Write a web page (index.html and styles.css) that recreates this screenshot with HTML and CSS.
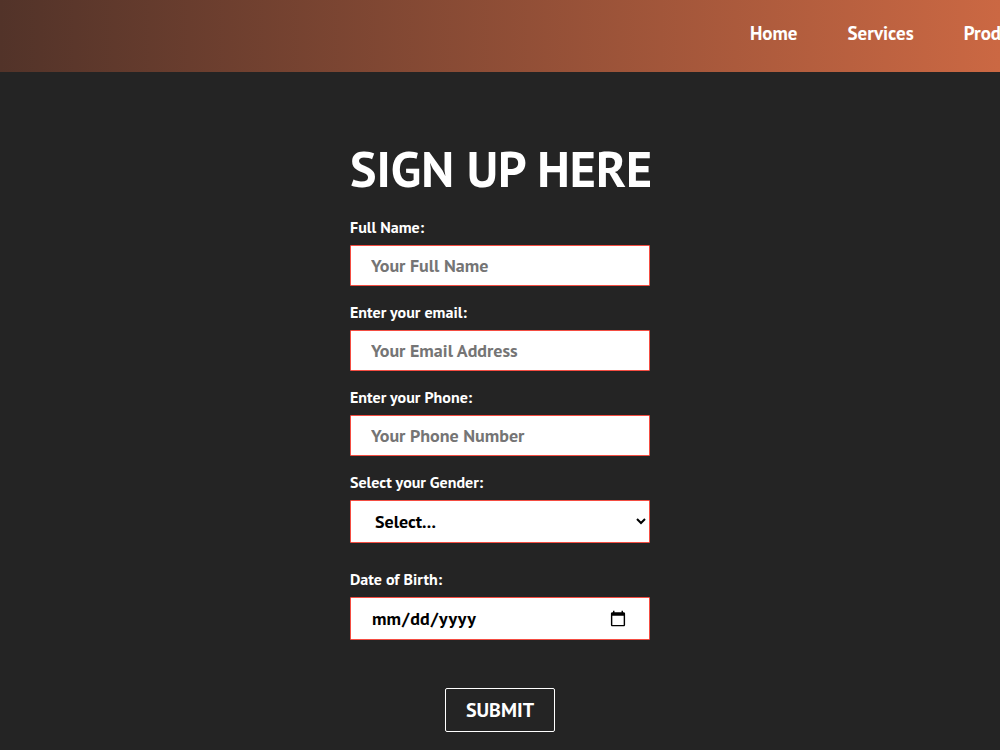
FILE: index.html
```html
<!DOCTYPE html>
<html lang="en">
<head>
    <meta charset="UTF-8">
    <meta name="viewport" content="width=device-width, initial-scale=1.0">
    <title>Sign Up</title>
    <link rel="stylesheet" href="styles.css">
</head>
<body>
    <header>
        <nav class="navbar">
            <a href="#">Home</a>
            <a href="#">Services</a>
            <a href="#">Products</a>
        </nav>
    </header>
    <main>
        <form class="signup-form">
            <h1>SIGN UP HERE</h1>

            <label for="name">Full Name:</label>
            <input type="text" id="name" class="field" placeholder="Your Full Name">

            <label for="email">Enter your email:</label>
            <input type="email" id="email" class="field" placeholder="Your Email Address">

            <label for="phone">Enter your Phone:</label>
            <input type="tel" id="phone" class="field" placeholder="Your Phone Number">

            <label for="gender">Select your Gender:</label>
            <select id="gender" class="field tall">
                <option value="">Select...</option>
                <option value="male">Male</option>
                <option value="female">Female</option>
            </select>

            <label for="dob">Date of Birth:</label>
            <input type="date" id="dob" class="field tall">

            <button type="submit">SUBMIT</button>
        </form>
    </main>
</body>
</html>
```
FILE: styles.css
```css
* {
    box-sizing: border-box;
}
body {
    margin: 0;
    background-color: #242424;
    color: white;
    font-family: "PT Sans", "Noto Sans", sans-serif;
    font-weight: bold;
}
header {
    background: linear-gradient(to right, #523329, #cb6843);
    overflow: hidden;
}
.navbar {
    display: flex;
    gap: 50px;
    padding: 20px 0 26px 75%;
}
.navbar a {
    color: white;
    font-size: 19px;
    line-height: 26px;
    text-decoration: none;
}
.signup-form {
    display: flex;
    flex-direction: column;
    max-width: 300px;
    margin: 0 auto;
    padding: 67px 0 16px;
}
h1 {
    margin: 0 0 16px;
    font-size: 50px;
    line-height: 60px;
    text-align: center;
    white-space: nowrap;
}
label {
    margin-bottom: 6px;
    font-size: 16px;
    line-height: 24px;
}
.field {
    height: 41px;
    margin: 0 0 14px;
    padding: 0 20px;
    border: 1px solid #f44d42;
    border-radius: 1px;
    background-color: white;
    color: black;
    font: inherit;
    font-size: 18px;
}
.tall {
    height: 43px;
    margin-bottom: 24px;
}
button {
    align-self: center;
    width: 110px;
    height: 44px;
    margin-top: 24px;
    border: 1px solid white;
    border-radius: 2px;
    background: none;
    color: white;
    font: inherit;
    font-size: 20px;
}
```
